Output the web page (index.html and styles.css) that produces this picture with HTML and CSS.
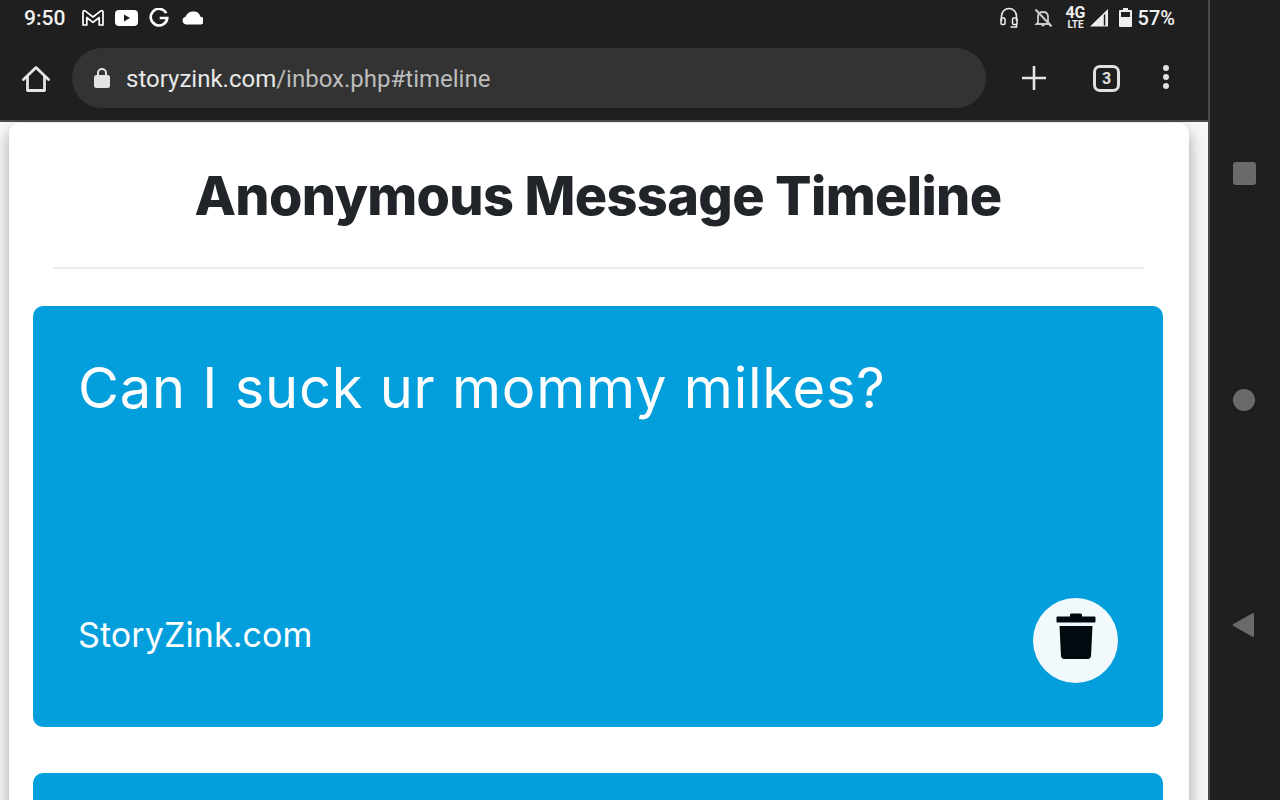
FILE: index.html
```html
<!DOCTYPE html>
<html>
<head>
<meta charset="utf-8">
<title>Anonymous Message Timeline</title>
	<link rel="stylesheet" href="styles.css">
</head>
<body>
	<div class="device">
		<div class="screen">
			<header class="chrome">
				<div class="status-bar">
					<div class="status-left">
						<span class="clock">9:50</span>
						<svg class="notif-icon" width="24" height="20" viewBox="0 0 24 20"><path d="M2 17V4c0-1.200 1.300-1.800 2.200-1.100L12 9l7.800-6.100c.9-.7 2.200-.1 2.200 1.100v13h-3.800V9.500L12 14.300 5.800 9.500V17z" fill="none" stroke="#fff" stroke-width="1.700" stroke-linejoin="round"/></svg>
						<svg class="notif-icon" width="23" height="18" viewBox="0 0 23 18"><rect x="0" y="1" width="23" height="16" rx="4" fill="#fff"/><path d="M9 5.500v7l6-3.500z" fill="#1f1f1f"/></svg>
						<svg class="notif-icon google" width="20" height="20" viewBox="0 0 20 20"><path d="M17.300 5.100A8.300 8.300 0 1 0 18.300 10h-7.600" fill="none" stroke="#fff" stroke-width="2.600"/></svg>
						<svg class="notif-icon cloud" width="21" height="14" viewBox="1 1 18 12"><path d="M4.500 12.500a3.300 3.300 0 0 1-.4-6.500A6.300 6.300 0 0 1 11 1.500a6 6 0 0 1 5.800 4.500 3.300 3.300 0 0 1 .6 6.500z" fill="#fff"/></svg>
					</div>
					<div class="status-right">
						<svg class="sys-icon" width="20" height="22" viewBox="0 0 20 22"><path d="M2.500 14V9a7.500 7.500 0 0 1 15 0v5" fill="none" stroke="#eee" stroke-width="1.600"/><rect x="2" y="11" width="4" height="6.500" rx="1.200" fill="none" stroke="#eee" stroke-width="1.500"/><rect x="13.500" y="11" width="4.500" height="6.500" rx="1.200" fill="none" stroke="#eee" stroke-width="1.500"/><path d="M17.500 17v3h-6" fill="none" stroke="#eee" stroke-width="1.600"/></svg>
						<svg class="sys-icon bell" width="20" height="20" viewBox="0 0 20 20"><path d="M5 14.500V9c0-3 2-5 5-5s5 2 5 5v5.500l1.500 1.500h-13z" fill="none" stroke="#ccc" stroke-width="1.800"/><path d="M8.500 17.500h3" stroke="#ccc" stroke-width="1.600"/><path d="M2.500 1.500l16 17" stroke="#ccc" stroke-width="2"/></svg>
						<div class="net">
							<div class="net-4g">4G</div>
							<div class="net-lte">LTE</div>
						</div>
						<svg class="sys-icon signal" width="20" height="20" viewBox="0 0 20 20"><path d="M1 18.500L19 1v17.500z" fill="#eee"/><path d="M14.800 7v10.500h1.500V6z" fill="#1f1f1f"/></svg>
						<svg class="sys-icon battery" width="13" height="20" viewBox="0 0 13 20"><path d="M4 0h5v2h3a1 1 0 0 1 1 1v15a1 1 0 0 1-1 1H1a1 1 0 0 1-1-1V3a1 1 0 0 1 1-1h3z" fill="#eee"/><rect x="2" y="4" width="9" height="5" fill="#1f1f1f"/></svg>
						<span class="battery-pct">57%</span>
					</div>
				</div>
				<div class="toolbar">
					<svg class="home-icon" width="30" height="30" viewBox="0 0 30 30"><path d="M2.500 15.500L15 3.500l12.500 12M6.500 13v13.500h17V13" fill="none" stroke="#e6e6e6" stroke-width="2.800" stroke-linejoin="round" stroke-linecap="round"/></svg>
					<div class="omnibox">
						<svg class="lock-icon" width="16" height="22" viewBox="0 0 16 22"><path d="M4 9V6a4 4 0 0 1 8 0v3" fill="none" stroke="#e2e2e2" stroke-width="2"/><rect x="0" y="8" width="16" height="13" rx="2.500" fill="#e2e2e2"/></svg>
						<span class="url"><span class="url-host">storyzink.com</span>/inbox.php#timeline</span>
					</div>
					<svg class="plus-icon" width="24" height="24" viewBox="0 0 24 24"><path d="M12 0v24M0 12h24" stroke="#e6e6e6" stroke-width="2.600"/></svg>
					<div class="tab-count">3</div>
					<div class="menu-dots"><i></i><i></i><i></i></div>
				</div>
			</header>
			<main class="page">
				<section class="panel">
					<h1 class="panel-title">Anonymous Message Timeline</h1>
					<hr class="panel-rule">
					<article class="message">
						<p class="message-text">Can I suck ur mommy milkes?</p>
						<div class="message-foot">
							<span class="message-brand">StoryZink.com</span>
							<button class="delete-btn">
								<svg width="40" height="48" viewBox="0 0 40 48"><path d="M14 3c0-1 .8-1.500 1.500-1.500h9c.7 0 1.500.5 1.500 1.500v1.500h12.500c.6 0 1 .4 1 1v4c0 .6-.4 1-1 1H1.500c-.6 0-1-.4-1-1v-4c0-.6.4-1 1-1H14z" fill="#020a10"/><path d="M3.500 14h33l-1.500 30c-.1 1.500-1.300 3-3 3H8c-1.700 0-2.900-1.500-3-3z" fill="#020a10"/></svg>
							</button>
						</div>
					</article>
					<article class="message"></article>
				</section>
			</main>
		</div>
		<aside class="nav-bar">
			<span class="nav-square"></span>
			<span class="nav-circle"></span>
			<svg width="24" height="26" viewBox="0 0 24 26"><path d="M21 2v22L1.500 13z" fill="#6a6a6a" stroke="#6a6a6a" stroke-width="2" stroke-linejoin="round"/></svg>
		</aside>
	</div>
</body>
</html>
```

FILE: styles.css
```css
html, body {
	margin: 0;
	padding: 0;
	height: 100%;
	overflow: hidden;
}
body {
	font-family: Roboto, sans-serif;
	background: #1f1f1f;
}
.device {
	display: flex;
	height: 800px;
}
.screen {
	width: 1208px;
	display: flex;
	flex-direction: column;
}
.chrome {
	height: 120px;
	flex-shrink: 0;
	background: #1f1f1f;
	border-bottom: 2px solid #4a4a4a;
}
.status-bar {
	height: 36px;
	display: flex;
	justify-content: space-between;
	align-items: center;
	padding: 0 33px 0 24px;
	color: #f2f2f2;
}
.status-left, .status-right {
	display: flex;
	align-items: center;
}
.status-left {
	gap: 10px;
}
.clock {
	font-size: 21px;
	font-weight: 500;
	margin-right: 6px;
}
.notif-icon.google {
	margin-left: 1px;
}
.notif-icon.cloud {
	margin-left: 3px;
}
.sys-icon.bell {
	margin-left: 14px;
}
.net {
	display: flex;
	flex-direction: column;
	align-items: center;
	margin-left: 12px;
	color: #eee;
	font-weight: 700;
}
.net-4g {
	font-size: 16px;
	line-height: 14px;
}
.net-lte {
	font-size: 10px;
	line-height: 10px;
}
.sys-icon.signal {
	margin-left: 3px;
}
.sys-icon.battery {
	margin-left: 10px;
}
.battery-pct {
	font-size: 20px;
	font-weight: 500;
	margin-left: 6px;
}
.toolbar {
	height: 84px;
	display: flex;
	align-items: flex-start;
	padding-top: 12px;
	box-sizing: border-box;
}
.home-icon {
	margin: 16px 0 0 21px;
}
.omnibox {
	width: 914px;
	height: 60px;
	margin-left: 21px;
	border-radius: 30px;
	background: #333333;
	display: flex;
	align-items: center;
	padding-left: 22px;
	box-sizing: border-box;
}
.url {
	margin-left: 16px;
	padding-top: 2px;
	font-size: 24px;
	color: #bdbdbd;
	white-space: nowrap;
}
.url-host {
	color: #e8e8e8;
}
.plus-icon {
	margin: 18px 0 0 36px;
}
.tab-count {
	width: 27px;
	height: 27px;
	box-sizing: border-box;
	margin: 17px 0 0 47px;
	border: 3px solid #e0e0e0;
	border-radius: 7px;
	color: #e0e0e0;
	font-size: 16px;
	font-weight: 700;
	display: flex;
	align-items: center;
	justify-content: center;
}
.menu-dots {
	margin: 17px 0 0 43px;
	display: flex;
	flex-direction: column;
	gap: 3px;
}
.menu-dots i {
	display: block;
	width: 6px;
	height: 6px;
	border-radius: 50%;
	background: #e0e0e0;
}
.page {
	flex: 1;
	overflow: hidden;
	background: #f7f7f7;
	padding: 1px 19px 0 9px;
}
.panel {
	background: #fff;
	border-radius: 10px 10px 0 0;
	box-shadow: 0 8px 16px rgba(0, 0, 0, 0.35);
	padding: 0 26px 0 24px;
	height: 900px;
}
.panel-title {
	margin: 0;
	padding-top: 44px;
	height: 58px;
	line-height: 58px;
	text-align: center;
	font-family: Inter, sans-serif;
	font-weight: 800;
	font-size: 54px;
	letter-spacing: -0.650px;
	color: #212529;
}
.panel-rule {
	margin: 42px 19px 0 20px;
	border: 0;
	border-top: 2px solid #e9ecef;
}
.message {
	margin-top: 37px;
	height: 421px;
	background: #039fdd;
	border-radius: 10px;
	color: #fff;
	padding: 46px 45px 44px;
	box-sizing: border-box;
	display: flex;
	flex-direction: column;
	justify-content: space-between;
}
.message + .message {
	margin-top: 46px;
}
.message-text {
	margin: 0;
	font-family: Inter, sans-serif;
	font-size: 56px;
	letter-spacing: 0.780px;
	line-height: 72px;
}
.message-foot {
	display: flex;
	justify-content: space-between;
	align-items: center;
}
.message-brand {
	font-family: Inter, sans-serif;
	font-size: 34px;
	letter-spacing: 0.100px;
	padding-bottom: 12px;
}
.delete-btn {
	width: 85px;
	height: 85px;
	border: 0;
	padding: 0 0 10px;
	border-radius: 50%;
	background: #f2f9fd;
	display: flex;
	align-items: center;
	justify-content: center;
}
.nav-bar {
	width: 72px;
	box-sizing: border-box;
	border-left: 2px solid #4a4a4a;
	display: flex;
	flex-direction: column;
	align-items: center;
	padding: 162px 2px 0 0;
}
.nav-square {
	width: 23px;
	height: 23px;
	border-radius: 3px;
	background: #6a6a6a;
}
.nav-circle {
	width: 22px;
	height: 22px;
	margin-top: 204px;
	border-radius: 50%;
	background: #6a6a6a;
}
.nav-bar svg {
	margin-top: 201px;
}
```
